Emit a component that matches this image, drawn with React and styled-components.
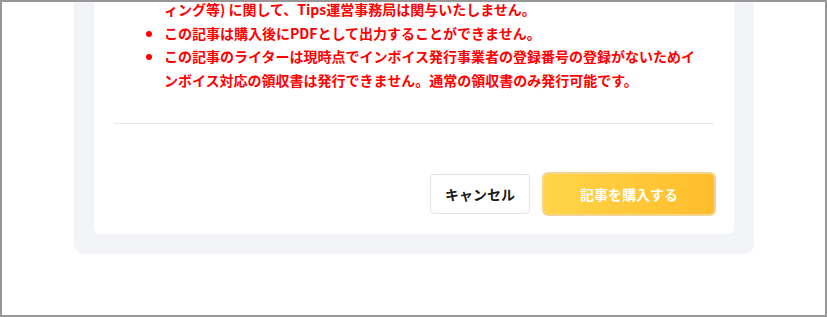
import React from 'react'
import styled, { createGlobalStyle } from 'styled-components'

const GlobalStyle = createGlobalStyle`
  html, body {
    margin: 0;
    padding: 0;
    background: #fff;
  }
  body {
    font-family: "Noto Sans CJK JP", "Noto Sans", sans-serif;
  }
`

const Frame = styled.div`
  width: 827px;
  height: 317px;
  box-sizing: border-box;
  border: 2px solid #979797;
  overflow: hidden;
  background: #fff;
`

const Panel = styled.div`
  width: 680px;
  box-sizing: border-box;
  margin: -68px 0 0 72px;
  padding: 20px;
  background: #f3f4f8;
  border-radius: 10px;
`

const Card = styled.div`
  background: #fff;
  border-radius: 6px;
  padding: 20px;
`

const Notes = styled.ul`
  list-style: none;
  margin: 0 0 30px 0;
  padding: 0 14px 0 32px;
  display: flex;
  flex-direction: column;
`

const Note = styled.li`
  display: flex;
  align-items: flex-start;
  gap: 12px;
  color: #ff0000;
  font-size: 14px;
  font-weight: 700;
  line-height: 1.7;
`

const Dot = styled.span`
  flex: none;
  width: 6px;
  height: 6px;
  border-radius: 50%;
  background: #ff0000;
  margin-top: 9px;
`

const NoteText = styled.span`
  flex: 1;
  line-break: normal;
`

const Divider = styled.hr`
  border: none;
  border-top: 1px solid #e6e6e6;
  margin: 0;
`

const Footer = styled.div`
  display: flex;
  justify-content: flex-end;
  gap: 14px;
  margin-top: 50px;
`

const Button = styled.button`
  height: 40px;
  box-sizing: border-box;
  border-radius: 4px;
  font-family: "Noto Sans CJK JP", "Noto Sans", sans-serif;
  font-size: 14px;
  font-weight: 700;
  cursor: pointer;
  width: ${(p) => p.$width}px;
`

const CancelButton = styled(Button)`
  background: #fff;
  border: 1px solid #e3e3e3;
  color: #1a1a1a;
`

const BuyButton = styled(Button)`
  border: none;
  color: #fff;
  background: linear-gradient(90deg, #ffd548 0%, #ffbd2b 100%);
  box-shadow: 0 0 0 2px #f2d593;
`

const notes = [
  '購入後のコンテンツ内容に関するトラブルやその他のお問い合わせ（決済、マーケティング等) に関して、Tips運営事務局は関与いたしません。',
  'この記事は購入後にPDFとして出力することができません。',
  'この記事のライターは現時点でインボイス発行事業者の登録番号の登録がないためインボイス対応の領収書は発行できません。通常の領収書のみ発行可能です。',
]

const App = () => {
  return (
    <>
      <GlobalStyle />
      <Frame>
        <Panel>
          <Card>
            <Notes>
              {notes.map((text) => (
                <Note key={text}>
                  <Dot />
                  <NoteText>{text}</NoteText>
                </Note>
              ))}
            </Notes>
            <Divider />
            <Footer>
              <CancelButton $width={100}>キャンセル</CancelButton>
              <BuyButton $width={170}>記事を購入する</BuyButton>
            </Footer>
          </Card>
        </Panel>
      </Frame>
    </>
  )
}

export default App
